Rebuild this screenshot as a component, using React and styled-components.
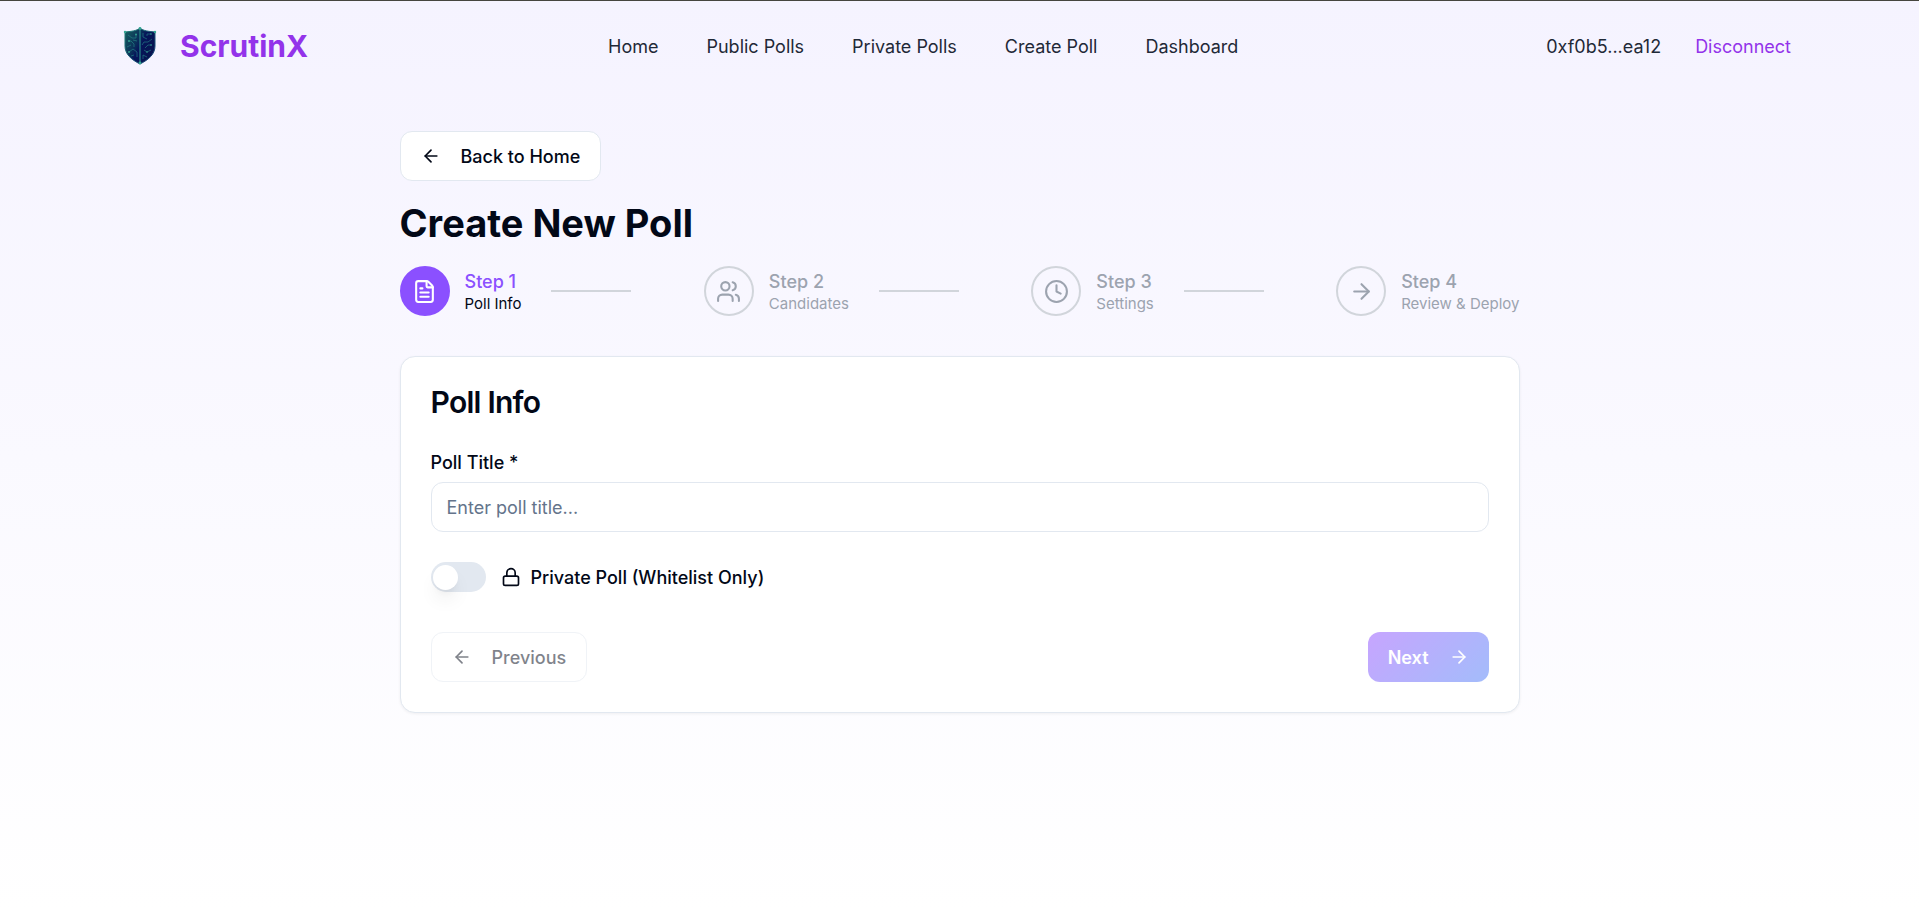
import React, { useState } from 'react';
import styled, { createGlobalStyle } from 'styled-components';
import { ArrowLeft, ArrowRight, Clock, FileText, Lock, Users } from 'lucide-react';

const GlobalStyle = createGlobalStyle`
  *, *::before, *::after {
    box-sizing: border-box;
  }
  body {
    margin: 0;
    font-family: 'Inter', 'Liberation Sans', sans-serif;
    font-size: 18px;
    line-height: 25px;
    color: #020817;
  }
  h1, h2, p, ol {
    margin: 0;
    padding: 0;
  }
  button, input {
    font: inherit;
  }
`

const Page = styled.div`
  min-height: 100vh;
  border-top: 1px solid #45453f;
  background: linear-gradient(to bottom, #f5f3ff, #ffffff);
`

const Header = styled.header`
  display: flex;
  align-items: center;
  justify-content: space-between;
  height: 90px;
  padding: 0 120px;
`

const Brand = styled.a`
  display: flex;
  align-items: center;
  gap: 20px;
  font-size: 30px;
  font-weight: 700;
  line-height: 40px;
  color: #9333ea;
  text-decoration: none;
`

const Nav = styled.nav`
  display: flex;
  gap: 48px;
`

const NavLink = styled.a`
  color: #1f2937;
  text-decoration: none;
`

const Wallet = styled.div`
  display: flex;
  align-items: center;
  gap: 34px;
  padding: 0 8px;
  color: #1f2937;
`

const Disconnect = styled.button`
  border: 0;
  padding: 0;
  background: none;
  color: #9333ea;
  cursor: pointer;
`

const Main = styled.main`
  display: flex;
  flex-direction: column;
  align-items: flex-start;
  gap: 20px;
  max-width: 1120px;
  margin: 0 auto;
  padding: 40px 0;
`

const Button = styled.button`
  display: inline-flex;
  align-items: center;
  gap: 20px;
  height: 50px;
  padding: 0 20px;
  border: ${({ $primary }) => ($primary ? '0' : '1px solid #e2e8f0')};
  border-radius: 12px;
  background: ${({ $primary }) => ($primary ? 'linear-gradient(135deg, #904dff, #4a7cf8)' : '#ffffff')};
  color: ${({ $primary }) => ($primary ? '#ffffff' : '#020817')};
  font-weight: ${({ $primary }) => ($primary ? 600 : 500)};
  cursor: pointer;

  &:disabled {
    opacity: 0.5;
    cursor: default;
  }
`

const Title = styled.h1`
  font-size: 38px;
  font-weight: 700;
  line-height: 45px;
`

const Steps = styled.ol`
  display: flex;
  justify-content: space-between;
  width: 100%;
  list-style: none;
`

const Step = styled.li`
  display: flex;
  align-items: center;
  color: ${({ $active }) => ($active ? '#8b50ff' : '#9ca3af')};
`

const StepCircle = styled.span`
  display: flex;
  align-items: center;
  justify-content: center;
  width: 50px;
  height: 50px;
  margin-right: 15px;
  border: 2px solid ${({ $active }) => ($active ? '#8b50ff' : '#d1d5db')};
  border-radius: 50%;
  background: ${({ $active }) => ($active ? '#8b50ff' : 'transparent')};
  color: ${({ $active }) => ($active ? '#ffffff' : '#9ca3af')};
`

const StepName = styled.p`
  font-weight: 500;
`

const StepLabel = styled.p`
  font-size: 15px;
  line-height: 20px;
  color: ${({ $active }) => ($active ? '#020817' : '#9ca3af')};
`

const StepLine = styled.span`
  width: 80px;
  height: 2px;
  margin-left: 30px;
  background: #d1d5db;
`

const Card = styled.form`
  width: 100%;
  margin-top: 20px;
  padding: 30px;
  border: 1px solid #e2e8f0;
  border-radius: 15px;
  background: #ffffff;
  box-shadow: 0 1px 3px rgba(0, 0, 0, 0.06);
`

const CardTitle = styled.h2`
  margin-bottom: 30px;
  font-size: 30px;
  font-weight: 600;
  line-height: 30px;
  letter-spacing: -0.025em;
`

const FieldLabel = styled.label`
  display: block;
  margin-bottom: 3px;
  font-weight: 500;
  line-height: 32px;
`

const TextInput = styled.input`
  display: block;
  width: 100%;
  height: 50px;
  padding: 0 15px;
  border: 1px solid #e2e8f0;
  border-radius: 12px;
  background: #ffffff;
  color: #020817;

  &::placeholder {
    color: #64748b;
    opacity: 1;
  }
`

const SwitchRow = styled.div`
  display: flex;
  align-items: center;
  gap: 15px;
  margin: 30px 0 40px;
`

const Switch = styled.input`
  appearance: none;
  display: flex;
  align-items: center;
  width: 55px;
  height: 30px;
  margin: 0;
  padding: 0 2px;
  border-radius: 15px;
  background: ${({ checked }) => (checked ? '#8b50ff' : '#e2e8f0')};
  cursor: pointer;

  &::before {
    content: '';
    width: 25px;
    height: 25px;
    margin-left: ${({ checked }) => (checked ? 'auto' : '0')};
    border-radius: 50%;
    background: #ffffff;
    box-shadow: 0 12px 19px -4px rgba(0, 0, 0, 0.1), 0 5px 8px -5px rgba(0, 0, 0, 0.1);
  }
`

const SwitchLabel = styled.label`
  display: flex;
  align-items: center;
  gap: 10px;
  font-weight: 500;
`

const Actions = styled.div`
  display: flex;
  justify-content: space-between;
`

const ShieldLogo = () => (
    <svg width="40" height="40" viewBox="0 0 40 40" aria-hidden="true">
        <defs>
            <linearGradient id="shieldFill" x1="0" y1="0" x2="1" y2="0.6">
                <stop offset="0" stopColor="#17625f"/>
                <stop offset="0.45" stopColor="#0a2f5a"/>
                <stop offset="0.6" stopColor="#06155a"/>
                <stop offset="1" stopColor="#081450"/>
            </linearGradient>
            <linearGradient id="shieldEdge" x1="0" y1="0" x2="1" y2="1">
                <stop offset="0" stopColor="#1f7f74"/>
                <stop offset="1" stopColor="#173c78"/>
            </linearGradient>
        </defs>
        <path
            d="M20 2C17 5 10 5.500 5 6V20C5 28 11 33.500 20 38C29 33.500 35 28 35 20V6C30 5.500 23 5 20 2Z"
            fill="url(#shieldFill)"
            stroke="url(#shieldEdge)"
            strokeWidth="1"
        />
        <g fill="none" stroke="#2a8c8c" strokeWidth="0.700" opacity="0.850">
            <path d="M20 3V38" strokeWidth="1.400"/>
            <path d="M8 9L12 12H16V8M8 15H11L14 18V21M7 21L11 19M9 26L13 23L17 26V31M11 30L14 29M17 15L13 14"/>
            <path d="M23 7V11L27 13M31 8H27V10M32 13L28 16H24L22 19M32 19H28L25 22M31 24L27 26L24 24M23 33V29L27 31"/>
        </g>
        <g fill="#35a592">
            <circle cx="5" cy="6" r="1.200"/>
            <circle cx="35" cy="6" r="1.200"/>
            <circle cx="20" cy="2.500" r="1.400"/>
            <circle cx="20" cy="37" r="1.400"/>
            <circle cx="9" cy="15" r="0.900"/>
            <circle cx="16" cy="8.500" r="0.900"/>
            <circle cx="9" cy="26" r="0.900"/>
            <circle cx="31" cy="8" r="0.800"/>
            <circle cx="31" cy="19" r="0.800"/>
            <circle cx="27" cy="26" r="0.800"/>
        </g>
    </svg>
)

const links = ['Home', 'Public Polls', 'Private Polls', 'Create Poll', 'Dashboard']

const steps = [
    { name: 'Step 1', label: 'Poll Info', icon: FileText },
    { name: 'Step 2', label: 'Candidates', icon: Users },
    { name: 'Step 3', label: 'Settings', icon: Clock },
    { name: 'Step 4', label: 'Review & Deploy', icon: ArrowRight },
]

const App = () => {
    const [title, setTitle] = useState('')
    const [isPrivate, setIsPrivate] = useState(false)

    return (
        <Page>
            <GlobalStyle/>
            <Header>
                <Brand href="#">
                    <ShieldLogo/>
                    ScrutinX
                </Brand>
                <Nav>
                    {links.map((link) => (
                        <NavLink key={link} href="#">{link}</NavLink>
                    ))}
                </Nav>
                <Wallet>
                    <span>0xf0b5...ea12</span>
                    <Disconnect type="button">Disconnect</Disconnect>
                </Wallet>
            </Header>
            <Main>
                <Button type="button">
                    <ArrowLeft size={20}/>
                    Back to Home
                </Button>
                <Title>Create New Poll</Title>
                <Steps>
                    {steps.map(({ name, label, icon: Icon }, index) => (
                        <Step key={name} $active={index === 0}>
                            <StepCircle $active={index === 0}>
                                <Icon size={25}/>
                            </StepCircle>
                            <div>
                                <StepName>{name}</StepName>
                                <StepLabel $active={index === 0}>{label}</StepLabel>
                            </div>
                            {index < steps.length - 1 && <StepLine/>}
                        </Step>
                    ))}
                </Steps>
                <Card onSubmit={(e) => e.preventDefault()}>
                    <CardTitle>Poll Info</CardTitle>
                    <FieldLabel htmlFor="title">Poll Title *</FieldLabel>
                    <TextInput
                        id="title"
                        type="text"
                        placeholder="Enter poll title..."
                        value={title}
                        onChange={(e) => setTitle(e.target.value)}
                    />
                    <SwitchRow>
                        <Switch
                            id="private"
                            type="checkbox"
                            checked={isPrivate}
                            onChange={(e) => setIsPrivate(e.target.checked)}
                        />
                        <SwitchLabel htmlFor="private">
                            <Lock size={20}/>
                            Private Poll (Whitelist Only)
                        </SwitchLabel>
                    </SwitchRow>
                    <Actions>
                        <Button type="button" disabled>
                            <ArrowLeft size={20}/>
                            Previous
                        </Button>
                        <Button type="submit" $primary disabled={!title}>
                            Next
                            <ArrowRight size={20}/>
                        </Button>
                    </Actions>
                </Card>
            </Main>
        </Page>
    );
};

export default App;
